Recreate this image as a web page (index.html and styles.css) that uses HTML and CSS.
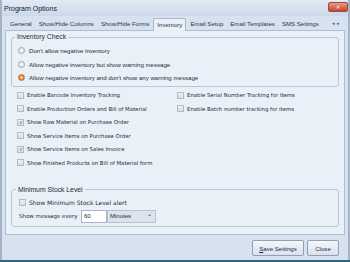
FILE: index.html
```html
<!DOCTYPE html>
<html lang="en">
<head>
  <meta charset="UTF-8">
  <title>Program Options</title>
  <link rel="stylesheet" href="styles.css">
</head>
<body>
  <div class="window">
    <div class="titlebar">
      <span class="title">Program Options</span>
      <span class="close">&#x2715;</span>
    </div>
    <div class="tabs">
      <span class="tab">General</span>
      <span class="tab">Show/Hide Columns</span>
      <span class="tab">Show/Hide Forms</span>
      <span class="tab active">Inventory</span>
      <span class="tab">Email Setup</span>
      <span class="tab">Email Templates</span>
      <span class="tab">SMS Settings</span>
      <span class="arrows">&#9666;&#9656;</span>
    </div>
    <div class="panel">
      <fieldset class="group">
        <legend>Inventory Check</legend>
        <label class="opt"><span class="radio"></span>Don't allow negative inventory</label>
        <label class="opt"><span class="radio"></span>Allow negative inventory but show warning message</label>
        <label class="opt"><span class="radio on"></span>Allow negative inventory and don't show any warning message</label>
      </fieldset>
      <div class="checks">
        <div class="col">
          <label class="opt"><span class="box"></span>Enable Barcode Inventory Tracking</label>
          <label class="opt"><span class="box"></span>Enable Production Orders and Bill of Material</label>
          <label class="opt"><span class="box on">&#10003;</span>Show Raw Material on Purchase Order</label>
          <label class="opt"><span class="box"></span>Show Service Items on Purchase Order</label>
          <label class="opt"><span class="box on">&#10003;</span>Show Service Items on Sales Invoice</label>
          <label class="opt"><span class="box"></span>Show Finished Products on Bill of Material form</label>
        </div>
        <div class="col">
          <label class="opt"><span class="box"></span>Enable Serial Number Tracking for Items</label>
          <label class="opt"><span class="box"></span>Enable Batch number tracking for items</label>
        </div>
      </div>
      <fieldset class="group stock">
        <legend>Minimum Stock Level</legend>
        <label class="opt"><span class="box"></span>Show Minimum Stock Level alert</label>
        <div class="every">
          <span class="every-label">Show message every</span>
          <span class="num">60</span>
          <span class="select">Minutes<span class="caret">&#8964;</span></span>
        </div>
      </fieldset>
    </div>
    <div class="footer">
      <button class="btn save"><u>S</u>ave Settings</button>
      <button class="btn close-btn">Close</button>
    </div>
  </div>
</body>
</html>
```
FILE: styles.css
```css
body { margin: 0; font-family: "Liberation Sans", Arial, sans-serif; font-size: 6.1px; color: #1e2a3a; background: #2b6a7a; }
.window { width: 346px; height: 260px; background: #d6e2f0; border-left: 2px solid #a5b3c4; border-right: 2px solid #a5b3c4; display: flex; flex-direction: column; }
.titlebar { height: 16px; flex: none; display: flex; align-items: center; justify-content: space-between; padding: 0 0 0 2px; background: linear-gradient(#e2eaf4, #ccd9e9); font-size: 7px; color: #101a28; }
.close { width: 18px; height: 8px; margin-top: -3px; background: linear-gradient(#e89a84, #c8452e); border: 1px solid #9a4a3a; border-radius: 2px; color: #fff; font-size: 5px; line-height: 8px; text-align: center; }
.tabs { height: 14px; flex: none; display: flex; align-items: flex-end; padding: 0 0 0 5px; }
.tab { padding: 0 3px 3px; margin-right: 1px; white-space: nowrap; color: #2a3646; }
.tab.active { background: #eaf0f8; border: 1px solid #a8b8cc; border-bottom: none; border-radius: 2px 2px 0 0; padding: 2px 3px 3px; margin-bottom: -1px; position: relative; }
.arrows { margin-left: auto; margin-right: 6px; color: #3a5ea8; font-size: 5px; padding-bottom: 4px; letter-spacing: 2px; }
.panel { margin: 0 3px; height: 205px; flex: none; background: #eaf0f8; border: 1px solid #aebdd0; padding: 2px 5px 0 5px; box-sizing: border-box; }
.group { margin: 0; border: 1px solid #b8c6d8; border-radius: 3px; padding: 3px 6px 1px; }
.group legend { padding: 0 2px; line-height: 8px; margin-left: -3px; font-size: 6.8px; }
.opt { display: flex; align-items: center; height: 13.5px; white-space: nowrap; }
.radio { flex: none; width: 5px; height: 5px; border-radius: 50%; border: 1px solid #a0a8b4; background: radial-gradient(#fff, #d4d8de); margin-right: 4px; }
.radio.on { background: radial-gradient(#fff 15%, #f29040 40%, #e06a10 75%); border-color: #c08040; }
.box { flex: none; width: 5px; height: 5px; border: 1px solid #b4bcc8; background: linear-gradient(#eef0f3, #d8dde3); margin-right: 3px; font-family: "Liberation Sans", sans-serif; font-size: 5px; line-height: 5px; color: #23407a; text-align: center; }
.checks { display: flex; padding: 2px 0 0 6px; height: 99px; box-sizing: border-box; font-family: "DejaVu Sans", sans-serif; font-size: 5.35px; }
.col:first-child { width: 160px; }
.stock { padding: 2px 6px 3px 7px; font-family: "DejaVu Sans", sans-serif; font-size: 6px; }
.stock legend { font-family: "Liberation Sans", Arial, sans-serif; font-size: 6.8px; }
.every { display: flex; align-items: center; height: 14px; }
.every-label { width: 62px; white-space: nowrap; font-size: 5.5px; }
.num { width: 22px; height: 11px; border: 1px solid #a6b4c6; background: #fff; padding-left: 2px; line-height: 11px; font-family: "Liberation Sans", Arial, sans-serif; }
.select { width: 42px; height: 11px; border: 1px solid #b6c2d0; background: #dbe3ed; padding: 0 3px 0 2px; line-height: 11px; display: flex; justify-content: space-between; font-family: "Liberation Sans", Arial, sans-serif; }
.caret { font-size: 6px; line-height: 7px; }
.footer { display: flex; justify-content: flex-end; gap: 3px; padding: 5px 9px 0 0; }
.btn { height: 16px; font-family: inherit; font-size: 6.1px; color: #1e2a3a; background: linear-gradient(#f4f7fb, #d9e2ee); border: 1px solid #8f9fb4; border-radius: 2px; padding: 0; }
.save { width: 52px; }
.close-btn { width: 32px; }
```
